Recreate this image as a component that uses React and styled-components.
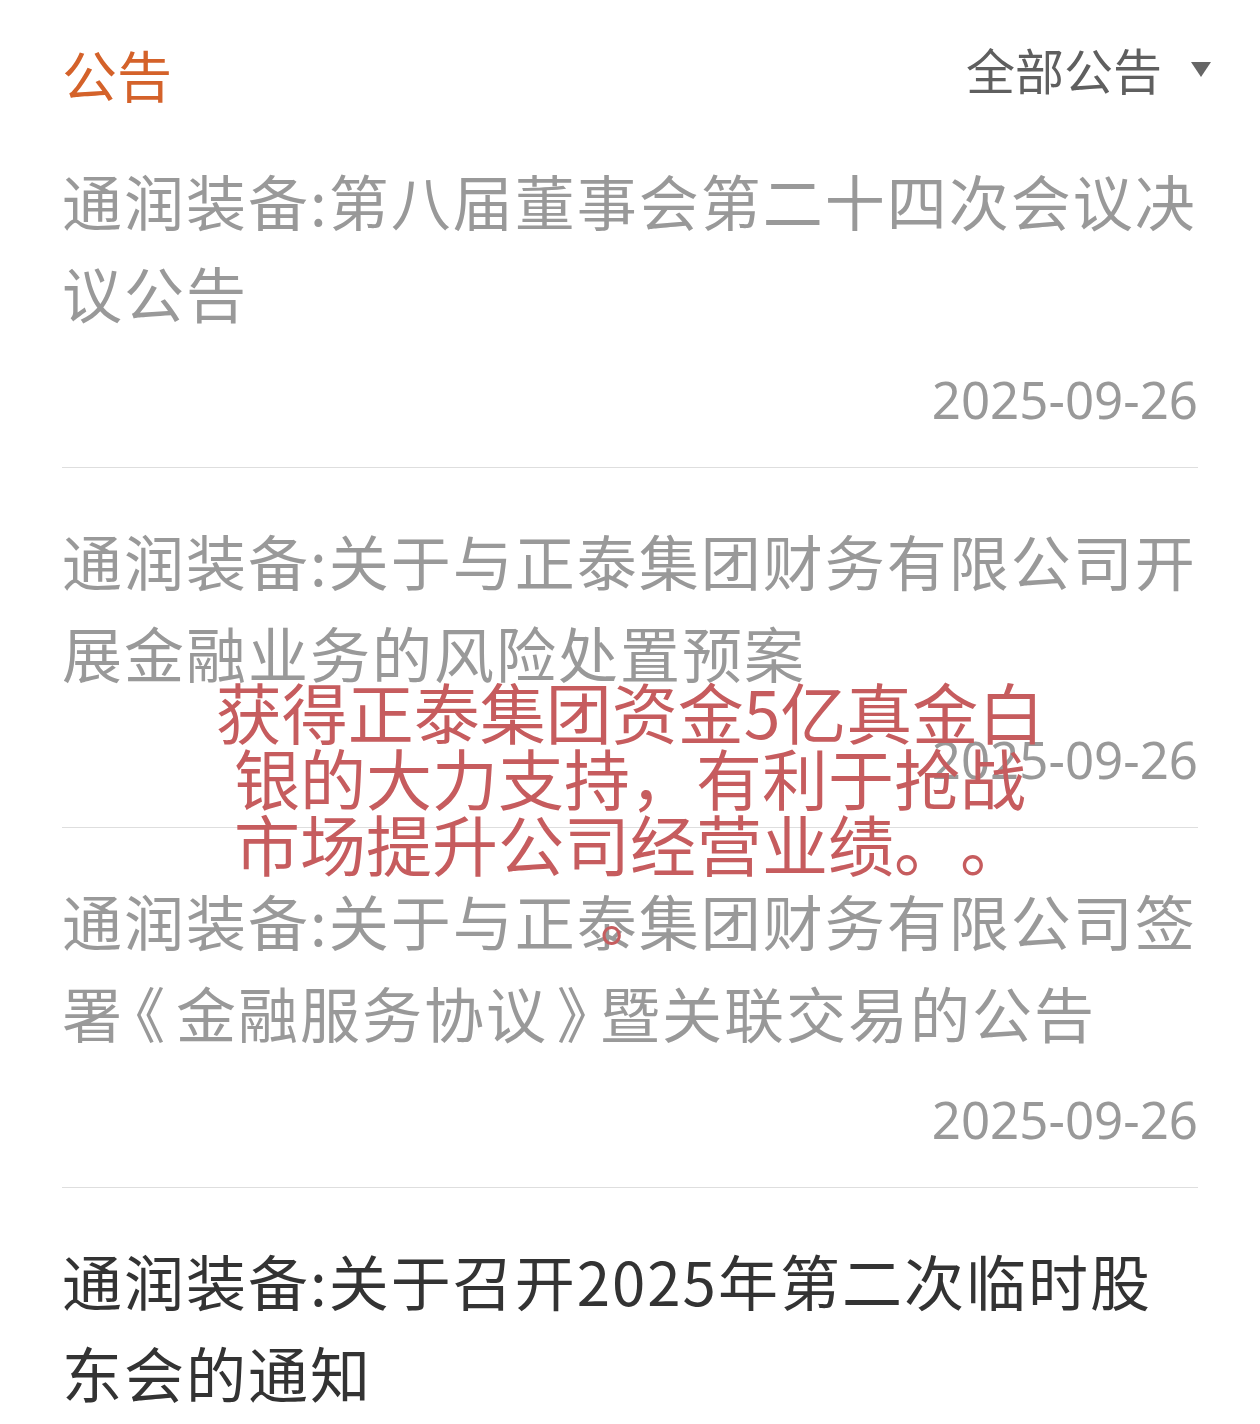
import React from 'react';
import styled, { createGlobalStyle } from 'styled-components';

const GlobalStyle = createGlobalStyle`
  body {
    margin: 0;
    background: #fff;
    font-family: "Noto Sans CJK SC", "Noto Sans", sans-serif;
  }
`;

const Page = styled.div`
  position: relative;
  width: 1260px;
  height: 1424px;
  overflow: hidden;
  background: #fff;
`;

const Header = styled.div`
  display: flex;
  justify-content: space-between;
  align-items: center;
  height: 70px;
  padding: 38px 48px 0 62px;
`;

const HeaderTitle = styled.div`
  font-size: 55px;
  line-height: 70px;
  color: #d4622a;
`;

const Filter = styled.div`
  display: flex;
  align-items: center;
  gap: 28px;
  font-size: 49px;
  line-height: 70px;
  color: #5f5f5f;
  margin-top: -8px;
`;

const List = styled.div`
  padding: 0 62px;
`;

const Item = styled.div`
  padding: 46px 0 38px;
  border-bottom: 1px solid #dedede;
`;

const Title = styled.div`
  font-size: 60px;
  letter-spacing: 2px;
  line-height: 92px;
  color: ${p => (p.$unread ? '#333' : '#999')};
  margin-right: -4px;
`;

// 书名号 in the reference font are narrower than full width
const Bracket = styled.span`
  font-feature-settings: "palt";
  margin: 0 10px;
`;

const Date = styled.div`
  margin-top: 31px;
  text-align: right;
  font-family: "Noto Sans", sans-serif;
  font-size: 51px;
  line-height: 60px;
  color: #999;
`;

const Overlay = styled.div`
  position: absolute;
  left: 0;
  right: 0;
  top: 677px;
  text-align: center;
  font-size: 66px;
  line-height: 66px;
  text-spacing-trim: space-all;
  color: #c65c5e;
  pointer-events: none;
`;

const Dot = styled.div`
  position: absolute;
  left: 600px;
  top: 885px;
  font-size: 60px;
  line-height: 60px;
  color: #c65c5e;
`;

const notices = [
  { title: '通润装备:第八届董事会第二十四次会议决议公告', date: '2025-09-26' },
  { title: '通润装备:关于与正泰集团财务有限公司开展金融业务的风险处置预案', date: '2025-09-26' },
  { title: '通润装备:关于与正泰集团财务有限公司签署《金融服务协议》暨关联交易的公告', date: '2025-09-26' },
  { title: '通润装备:关于召开2025年第二次临时股东会的通知', date: '2025-09-26', unread: true },
];

const renderTitle = (text) =>
  text.split(/([《》])/).map((part, i) =>
    part === '《' || part === '》' ? <Bracket key={i}>{part}</Bracket> : part
  );

const App = () => {
  return (
    <Page>
      <GlobalStyle />
      <Header>
        <HeaderTitle>公告</HeaderTitle>
        <Filter>
          全部公告
          <svg width="22" height="17" viewBox="0 0 22 17">
            <path d="M1 1 L21 1 L11 16 Z" fill="#666" />
          </svg>
        </Filter>
      </Header>
      <List>
        {notices.map((n, i) => (
          <Item key={i}>
            <Title $unread={n.unread}>{renderTitle(n.title)}</Title>
            <Date>{n.date}</Date>
          </Item>
        ))}
      </List>
      <Overlay>
        获得正泰集团资金5亿真金白
        <br />
        银的大力支持，有利于抢战
        <br />
        市场提升公司经营业绩。。
      </Overlay>
      <Dot>。</Dot>
    </Page>
  );
};

export default App;
